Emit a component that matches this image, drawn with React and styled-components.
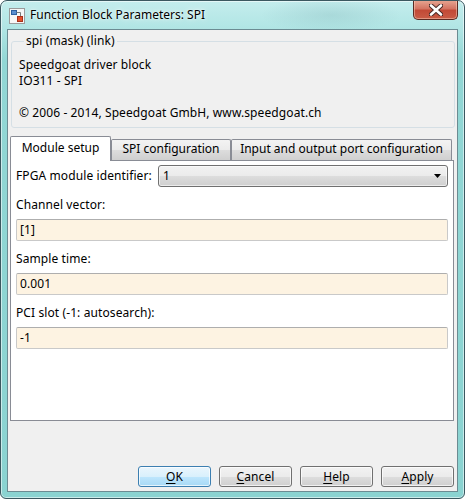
import React from "react";
import styled, { createGlobalStyle } from "styled-components";

// ========== global ==========
const GlobalStyle = createGlobalStyle`
  html, body {
    margin: 0;
    padding: 0;
    background: #ffffff;
  }
  body {
    font-family: "Noto Sans", "Open Sans", sans-serif;
    font-size: 12px;
    letter-spacing: 0.1px;
    color: #000;
  }
  * {
    box-sizing: border-box;
  }
`;

// ========== window frame ==========
const Window = styled.div`
  width: 465px;
  height: 499px;
  border: 1px solid #3b5860;
  border-radius: 7px 7px 6px 6px;
  padding: 0 6px 6px 6px;
  display: flex;
  flex-direction: column;
  overflow: hidden;
  background:
    radial-gradient(ellipse 70px 18px at 330px 14px, rgba(120, 170, 175, 0.25), transparent),
    linear-gradient(180deg, #c4eded 0px, #b0e5e4 28px, #92d7d5 60px, #8ad3d1 100%);
  box-shadow: inset 0 0 0 1px rgba(255, 255, 255, 0.55);
`;

const TitleBar = styled.div`
  height: 28px;
  display: flex;
  align-items: flex-start;
  flex-shrink: 0;
`;

const TitleIcon = styled.svg`
  margin: 7px 0 0 2px;
  flex-shrink: 0;
`;

const TitleText = styled.span`
  margin: 5px 0 0 5px;
  font-size: 12px;
  letter-spacing: 0;
  line-height: 18px;
  color: #000;
  text-shadow: 0 0 6px rgba(255, 255, 255, 0.9), 0 0 2px rgba(255, 255, 255, 0.9);
`;

const CloseButton = styled.div`
  margin: -1px 0 0 auto;
  width: 45px;
  height: 20px;
  border: 1px solid #5a2a22;
  border-top: none;
  border-radius: 0 0 5px 5px;
  background: linear-gradient(180deg, #e8a894 0%, #d47563 45%, #c24a36 55%, #c95c46 100%);
  box-shadow: inset 0 0 0 1px rgba(255, 220, 200, 0.45);
  display: flex;
  align-items: center;
  justify-content: center;
`;

// ========== client area ==========
const Client = styled.div`
  flex: 1;
  display: flex;
  flex-direction: column;
  background: #f0f0f0;
  border: 1px solid #6c8b92;
`;

// __________ group box __________
const GroupBox = styled.fieldset`
  margin: 3px 2px 0 3px;
  padding: 8px 7px 6px 7px;
  border: 1px solid #d5dfe5;
  border-radius: 3px;
  min-width: 0;
`;

const Legend = styled.legend`
  margin-left: 5px;
  padding: 0 2px;
  line-height: 16px;
`;

const Line = styled.div`
  line-height: 16px;
  margin-top: ${(p) => (p.$gap ? "16px" : "0")};
  white-space: nowrap;
`;

// __________ tabs __________
const TabStrip = styled.div`
  margin: 8px 0 0 2px;
  height: 24px;
  display: flex;
  align-items: flex-end;
`;

const Tab = styled.div`
  width: ${(p) => p.$w}px;
  height: ${(p) => (p.$active ? "25px" : "21px")};
  margin-bottom: ${(p) => (p.$active ? "-1px" : "0")};
  position: relative;
  z-index: ${(p) => (p.$active ? 1 : 0)};
  border: 1px solid #898c95;
  border-bottom: none;
  border-radius: 2px 2px 0 0;
  background: ${(p) =>
    p.$active ? "#ffffff" : "linear-gradient(180deg, #f3f3f3 0%, #ebebeb 50%, #dddddd 51%, #cfcfcf 100%)"};
  display: flex;
  justify-content: center;
  padding-top: ${(p) => (p.$active ? "3px" : "1px")};
  line-height: 16px;
  letter-spacing: 0;
  white-space: nowrap;
`;

const Panel = styled.div`
  margin: 0 3px 0 2px;
  height: 261px;
  background: #ffffff;
  border: 1px solid #898c95;
  padding: 4px 5px 0 5px;
  display: flex;
  flex-direction: column;
`;

const ComboRow = styled.div`
  display: flex;
  align-items: center;
  height: 22px;
`;

const Label = styled.div`
  line-height: 16px;
  margin-top: ${(p) => p.$top || 0}px;
  white-space: nowrap;
`;

const Combo = styled.div`
  margin-left: auto;
  width: 290px;
  height: 22px;
  border: 1px solid #707070;
  border-radius: 3px;
  background: linear-gradient(180deg, #f2f2f2 0%, #ebebeb 50%, #dddddd 51%, #cfcfcf 100%);
  box-shadow: inset 0 0 0 1px rgba(255, 255, 255, 0.6);
  display: flex;
  align-items: center;
  padding: 0 6px 0 4px;
  line-height: 16px;
`;

const Field = styled.div`
  margin-top: 6px;
  height: 22px;
  background: #fdf3e2;
  border: 1px solid #c9c9c9;
  border-top-color: #aeaeae;
  border-radius: 2px;
  padding: 0 3px;
  display: flex;
  align-items: center;
  line-height: 16px;
`;

// __________ buttons __________
const ButtonRow = styled.div`
  margin-top: auto;
  padding: 0 3px 4px 0;
  display: flex;
  justify-content: flex-end;
  gap: 8px;
`;

const Button = styled.div`
  width: 73px;
  height: 21px;
  border: 1px solid ${(p) => (p.$default ? "#3c7fb1" : "#707070")};
  border-radius: 3px;
  background: ${(p) =>
    p.$default
      ? "linear-gradient(180deg, #eaf6fd 0%, #d9f0fc 50%, #bee6fd 51%, #a7d9f5 100%)"
      : "linear-gradient(180deg, #f2f2f2 0%, #ebebeb 50%, #dddddd 51%, #cfcfcf 100%)"};
  box-shadow: inset 0 0 0 1px rgba(255, 255, 255, 0.7);
  display: flex;
  align-items: center;
  justify-content: center;
  line-height: 16px;
  u {
    text-decoration: underline;
    text-underline-offset: 2px;
  }
`;

// ========== component ==========
const App = () => {
  return (
    <>
      <GlobalStyle />
      <Window>
        {/* ========== title bar ========== */}
        <TitleBar>
          <TitleIcon width="16" height="16" viewBox="0 0 16 16">
            <rect x="0.5" y="0.5" width="15" height="15" fill="#f6f6f6" stroke="#9b9b9b" />
            <rect x="2.5" y="2.5" width="5" height="4" fill="#5b8fd0" stroke="#2d5f9e" />
            <path d="M7.5 4.5 H11.5 V8" fill="none" stroke="#7a7a7a" />
            <rect x="8.5" y="8.5" width="5" height="5" fill="#e4512c" stroke="#a8321a" />
          </TitleIcon>
          <TitleText>Function Block Parameters: SPI</TitleText>
          <CloseButton>
            <svg width="14" height="12" viewBox="0 0 14 12">
              <path d="M2 1.5 L12 10.5 M12 1.5 L2 10.5" stroke="#4a2a26" strokeWidth="4.6" strokeLinecap="round" />
              <path d="M2 1.5 L12 10.5 M12 1.5 L2 10.5" stroke="#ffffff" strokeWidth="2.6" strokeLinecap="round" />
            </svg>
          </CloseButton>
        </TitleBar>

        {/* ========== client ========== */}
        <Client>
          <GroupBox>
            <Legend>spi (mask) (link)</Legend>
            <Line>Speedgoat driver block</Line>
            <Line>IO311 - SPI</Line>
            <Line $gap>© 2006 - 2014, Speedgoat GmbH, www.speedgoat.ch</Line>
          </GroupBox>

          <TabStrip>
            <Tab $w={101} $active>Module setup</Tab>
            <Tab $w={120}>SPI configuration</Tab>
            <Tab $w={221}>Input and output port configuration</Tab>
          </TabStrip>

          <Panel>
            <ComboRow>
              <Label>FPGA module identifier:</Label>
              <Combo>
                <span>1</span>
                <svg width="7" height="4" viewBox="0 0 7 4" style={{ marginLeft: "auto" }}>
                  <polygon points="0,0 7,0 3.5,4" fill="#000" />
                </svg>
              </Combo>
            </ComboRow>

            <Label $top={10}>Channel vector:</Label>
            <Field>[1]</Field>

            <Label $top={10}>Sample time:</Label>
            <Field>0.001</Field>

            <Label $top={10}>PCI slot (-1: autosearch):</Label>
            <Field>-1</Field>
          </Panel>

          <ButtonRow>
            <Button $default>
              <span><u>O</u>K</span>
            </Button>
            <Button>
              <span><u>C</u>ancel</span>
            </Button>
            <Button>
              <span><u>H</u>elp</span>
            </Button>
            <Button>
              <span><u>A</u>pply</span>
            </Button>
          </ButtonRow>
        </Client>
      </Window>
    </>
  );
};

export default App;
